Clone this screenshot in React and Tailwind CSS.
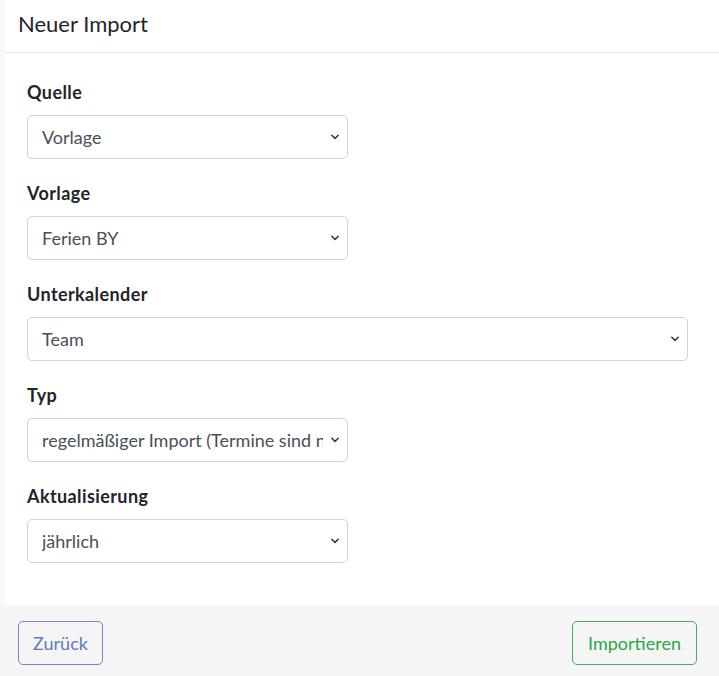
import React from "react";

function Chevron() {
  return (
    <svg
      className="pointer-events-none absolute right-[8px] top-1/2 -translate-y-1/2"
      width="10"
      height="7"
      viewBox="0 0 10 7"
      fill="none"
    >
      <path d="M1.8 1.7 L5 4.9 L8.2 1.7" stroke="#343a40" strokeWidth="1.5" strokeLinecap="round" strokeLinejoin="round" />
    </svg>
  );
}

function Field({ label, value, options, wide }) {
  return (
    <div className="mb-[21px]">
      <div className="h-[27px] mb-[9px] text-[18px] leading-[27px] font-bold tracking-[0.4px] text-[#212529]">{label}</div>
      <div className={"relative h-[44px] " + (wide ? "w-[661px]" : "w-[321px]")}>
        <select
          defaultValue={value}
          className="h-full w-full appearance-none rounded-[5px] border border-[#ced4da] bg-white pl-[14px] pr-[24px] text-[18px] text-[#495057] outline-none"
          style={{ fontFamily: "inherit" }}
        >
          {options.map((o) => (
            <option key={o} value={o}>
              {o}
            </option>
          ))}
        </select>
        <Chevron />
      </div>
    </div>
  );
}

export default function App() {
  return (
    <div className="w-[719px] h-[676px] overflow-hidden bg-white" style={{ fontFamily: "Lato, 'Liberation Sans', sans-serif" }}>
      <div className="bg-[#f8f8f8] pl-[5px]">
        <div className="bg-white">
          <div className="h-[53px] border-b border-[#e3e3e3] pl-[13px] flex items-center">
            <h1 className="text-[22px] leading-none text-[#212529] pb-[4px]">Neuer Import</h1>
          </div>
          <div className="pl-[22px] pt-[26px] pb-[22px]">
            <Field label="Quelle" value="Vorlage" options={["Vorlage", "URL", "Datei"]} />
            <Field label="Vorlage" value="Ferien BY" options={["Ferien BY", "Ferien BW", "Feiertage BY"]} />
            <Field label="Unterkalender" value="Team" options={["Team", "Privat"]} wide />
            <Field
              label="Typ"
              value="regelmäßiger Import (Termine sind nicht bearbeitbar)"
              options={["regelmäßiger Import (Termine sind nicht bearbeitbar)", "einmaliger Import"]}
            />
            <Field label="Aktualisierung" value="jährlich" options={["jährlich", "monatlich", "wöchentlich"]} />
          </div>
        </div>
      </div>
      <div className="bg-[#f5f5f5] h-[71px] flex items-start justify-between pt-[15px] pl-[18px] pr-[22px]">
        <button className="h-[44px] w-[85px] rounded-[5px] border border-[#6b8cc4] text-[#5b7cbc] text-[18px] bg-transparent">
          Zurück
        </button>
        <button className="h-[44px] w-[125px] rounded-[5px] border border-[#3cb55a] text-[#28a745] text-[18px] bg-transparent">
          Importieren
        </button>
      </div>
    </div>
  );
}
